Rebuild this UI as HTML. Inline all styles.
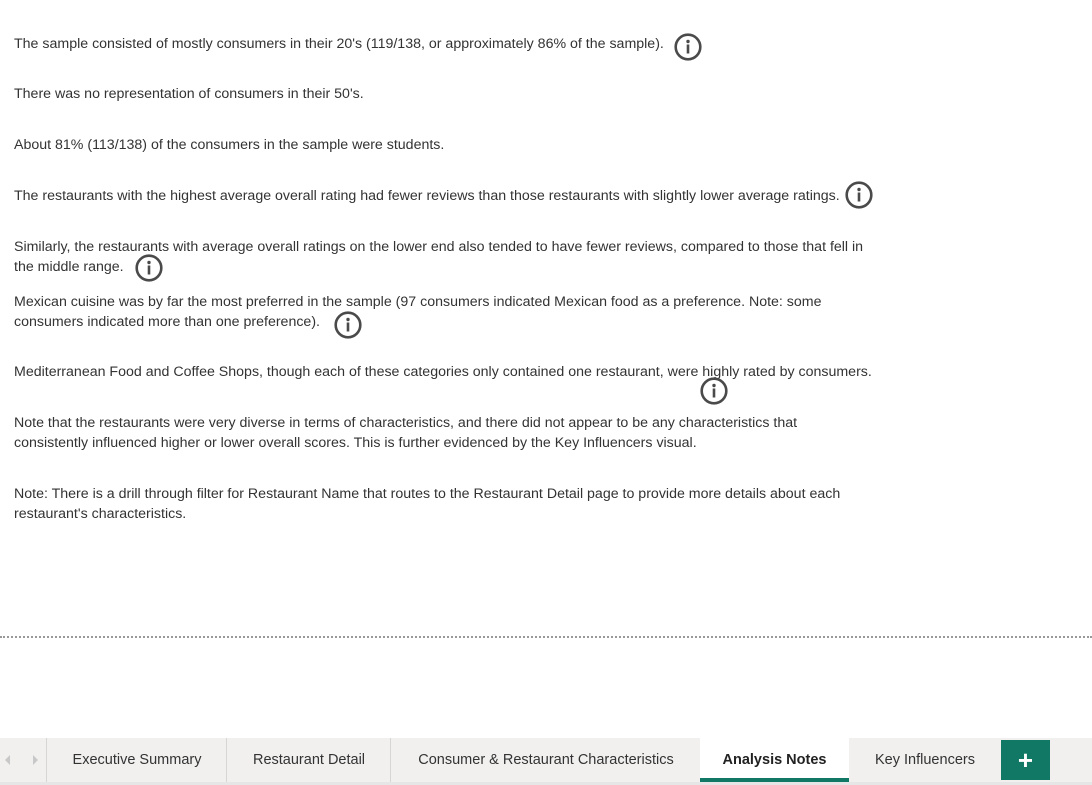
<!DOCTYPE html>
<html><head><meta charset="utf-8"><style>
html,body{margin:0;padding:0;background:#fff;width:1092px;height:785px;overflow:hidden;position:relative;font-family:"Liberation Sans",sans-serif;}
.t{position:absolute;left:14px;font-size:14.2px;color:#333;line-height:20px;white-space:nowrap;}
.i{position:absolute;width:28px;height:28px;}
.dots{position:absolute;left:0;top:636px;width:1092px;border-top:2px dotted #999;}
.bar{position:absolute;left:0;top:738px;width:1092px;height:44px;background:#f1f0ef;border-bottom:3px solid #e6e6e6;}
.tab{position:absolute;top:0;height:44px;line-height:44px;text-align:center;font-size:14.5px;color:#333;border-left:1px solid #d6d6d6;}
.act{background:#fff;color:#222;font-weight:bold;}
.act:after{content:"";position:absolute;left:0;right:0;bottom:0;height:4px;background:#117865;}
.plus{position:absolute;left:1001px;top:2px;width:49px;height:40px;background:#117865;color:#fff;font-size:26px;font-weight:bold;text-align:center;line-height:40px;}
</style></head><body>
<div class="t" style="top:34px">The sample consisted of mostly consumers in their 20's (119/138, or approximately 86% of the sample).</div>
<div class="t" style="top:84px">There was no representation of consumers in their 50's.</div>
<div class="t" style="top:135px">About 81% (113/138) of the consumers in the sample were students.</div>
<div class="t" style="top:186px">The restaurants with the highest average overall rating had fewer reviews than those restaurants with slightly lower average ratings.</div>
<div class="t" style="top:237px">Similarly, the restaurants with average overall ratings on the lower end also tended to have fewer reviews, compared to those that fell in<br>the middle range.</div>
<div class="t" style="top:292px">Mexican cuisine was by far the most preferred in the sample (97 consumers indicated Mexican food as a preference. Note: some<br>consumers indicated more than one preference).</div>
<div class="t" style="top:362px">Mediterranean Food and Coffee Shops, though each of these categories only contained one restaurant, were highly rated by consumers.</div>
<div class="t" style="top:413px">Note that the restaurants were very diverse in terms of characteristics, and there did not appear to be any characteristics that<br>consistently influenced higher or lower overall scores. This is further evidenced by the Key Influencers visual.</div>
<div class="t" style="top:484px">Note: There is a drill through filter for Restaurant Name that routes to the Restaurant Detail page to provide more details about each<br>restaurant's characteristics.</div>

<svg class="i" style="left:674px;top:33px" viewBox="0 0 28 28"><circle cx="14" cy="14" r="12.3" fill="none" stroke="#4a4a4a" stroke-width="2.6"/><circle cx="14" cy="8.5" r="1.7" fill="#4a4a4a"/><rect x="12.7" y="11.5" width="2.6" height="9" fill="#4a4a4a"/></svg>
<svg class="i" style="left:845px;top:181px" viewBox="0 0 28 28"><circle cx="14" cy="14" r="12.3" fill="none" stroke="#4a4a4a" stroke-width="2.6"/><circle cx="14" cy="8.5" r="1.7" fill="#4a4a4a"/><rect x="12.7" y="11.5" width="2.6" height="9" fill="#4a4a4a"/></svg>
<svg class="i" style="left:135px;top:254px" viewBox="0 0 28 28"><circle cx="14" cy="14" r="12.3" fill="none" stroke="#4a4a4a" stroke-width="2.6"/><circle cx="14" cy="8.5" r="1.7" fill="#4a4a4a"/><rect x="12.7" y="11.5" width="2.6" height="9" fill="#4a4a4a"/></svg>
<svg class="i" style="left:334px;top:311px" viewBox="0 0 28 28"><circle cx="14" cy="14" r="12.3" fill="none" stroke="#4a4a4a" stroke-width="2.6"/><circle cx="14" cy="8.5" r="1.7" fill="#4a4a4a"/><rect x="12.7" y="11.5" width="2.6" height="9" fill="#4a4a4a"/></svg>
<svg class="i" style="left:700px;top:377px" viewBox="0 0 28 28"><circle cx="14" cy="14" r="12.3" fill="none" stroke="#4a4a4a" stroke-width="2.6"/><circle cx="14" cy="8.5" r="1.7" fill="#4a4a4a"/><rect x="12.7" y="11.5" width="2.6" height="9" fill="#4a4a4a"/></svg>

<div class="dots"></div>

<div class="bar">
 <div style="position:absolute;left:5px;top:17px;width:0;height:0;border-top:5px solid transparent;border-bottom:5px solid transparent;border-right:5px solid #c8c8c8"></div>
 <div style="position:absolute;left:33px;top:17px;width:0;height:0;border-top:5px solid transparent;border-bottom:5px solid transparent;border-left:5px solid #c8c8c8"></div>
 <div class="tab" style="left:46px;width:180px">Executive Summary</div>
 <div class="tab" style="left:226px;width:164px">Restaurant Detail</div>
 <div class="tab" style="left:390px;width:310px;border-right:1px solid #d6d6d6">Consumer &amp; Restaurant Characteristics</div>
 <div class="tab act" style="left:700px;width:149px;border-left:none">Analysis Notes</div>
 <div class="tab" style="left:849px;width:152px;border-left:none">Key Influencers</div>
 <div class="plus">+</div>
</div>
</body></html>
